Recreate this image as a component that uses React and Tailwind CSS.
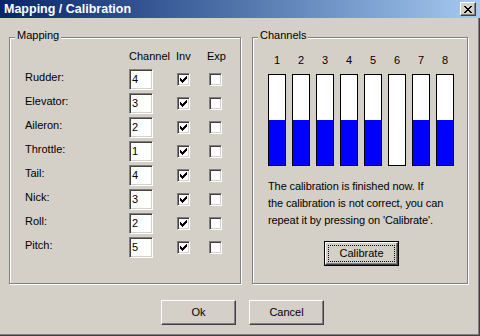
import React from "react";

const CHECK = [
  "......#",
  ".....##",
  "#...###",
  "##.###.",
  "#####..",
  ".###...",
  "..#....",
];

const XGLYPH = [
  "##....##",
  ".##..##.",
  "..####..",
  "...##...",
  "..####..",
  ".##..##.",
  "##....##",
];

function PixelGlyph({ rows, className }) {
  const w = rows[0].length;
  const h = rows.length;
  const rects = [];
  rows.forEach((r, y) =>
    r.split("").forEach((c, x) => {
      if (c === "#") rects.push(<rect key={x + "-" + y} x={x} y={y} width="1" height="1" />);
    })
  );
  return (
    <svg width={w} height={h} viewBox={`0 0 ${w} ${h}`} shapeRendering="crispEdges" className={className} fill="#000">
      {rects}
    </svg>
  );
}

function Checkbox({ checked }) {
  return (
    <div className="w-[13px] h-[13px] bg-white border border-t-[#808080] border-l-[#808080] border-b-white border-r-white shadow-[inset_1px_1px_0_#404040,inset_-1px_-1px_0_#d4d0c8] flex items-center justify-center">
      {checked && <PixelGlyph rows={CHECK} />}
    </div>
  );
}

function Input({ value }) {
  return (
    <div className="w-[24px] h-[21px] bg-white border border-t-[#808080] border-l-[#808080] border-b-white border-r-white shadow-[inset_1px_1px_0_#404040,inset_-1px_-1px_0_#d4d0c8] pl-[2px] flex items-center text-[11px] leading-[13px]">
      {value}
    </div>
  );
}

function Button({ children, focused }) {
  if (focused) {
    return (
      <div className="w-[75px] h-[25px] border border-black">
        <div className="w-full h-full border border-t-white border-l-white border-b-[#404040] border-r-[#404040] shadow-[inset_-1px_-1px_0_#808080] p-[2px]">
          <div className="w-full h-full border border-dotted border-black flex items-center justify-center text-[11px] leading-[13px]">
            {children}
          </div>
        </div>
      </div>
    );
  }
  return (
    <div className="w-[75px] h-[25px] border border-t-white border-l-white border-b-[#404040] border-r-[#404040] shadow-[inset_-1px_-1px_0_#808080] flex items-center justify-center text-[11px] leading-[13px]">
      {children}
    </div>
  );
}

function GroupBox({ label, className, children }) {
  return (
    <div className={"relative border border-[#808080] shadow-[inset_1px_1px_0_#fff,1px_1px_0_#fff] " + className}>
      <div className="absolute -top-[9px] left-[5px] px-[2px] bg-[#d4d0c8] text-[11px] leading-[13px]">{label}</div>
      {children}
    </div>
  );
}

const rows = [
  ["Rudder:", "4"],
  ["Elevator:", "3"],
  ["Aileron:", "2"],
  ["Throttle:", "1"],
  ["Tail:", "4"],
  ["Nick:", "3"],
  ["Roll:", "2"],
  ["Pitch:", "5"],
];

const channels = [50, 50, 50, 50, 50, 0, 50, 50];

export default function App() {
  return (
    <div className="w-[480px] h-[336px] bg-[#d4d0c8] flex flex-col font-['Liberation_Sans',Arial,sans-serif] text-black shadow-[inset_-1px_-1px_0_#404040,inset_-2px_-2px_0_#808080] overflow-hidden">
      <div className="h-[18px] bg-linear-to-r from-[#0a246a] to-[#a6caf0] flex items-center justify-between pl-[4px] pr-[4px]">
        <span className="text-white font-bold text-[12.5px] leading-[16px] whitespace-nowrap">Mapping / Calibration</span>
        <div className="w-[16px] h-[14px] bg-[#d4d0c8] border border-t-white border-l-white border-b-[#404040] border-r-[#404040] shadow-[inset_-1px_-1px_0_#808080] flex items-center justify-center">
          <PixelGlyph rows={XGLYPH} />
        </div>
      </div>

      <div className="flex pt-[19px] pl-[9px] gap-[11px]">
        <GroupBox label="Mapping" className="w-[232px] h-[247px]">
          <div className="pt-[12px] pl-[15px] flex flex-col">
            <div className="flex text-[11px] leading-[13px]">
              <div className="w-[104px]" />
              <div className="w-[47px]">Channel</div>
              <div className="w-[31px]">Inv</div>
              <div>Exp</div>
            </div>
            <div className="mt-[6px] flex flex-col gap-[3px]">
              {rows.map(([label, v]) => (
                <div key={label} className="h-[21px] flex items-center">
                  <div className="w-[104px] text-[11px] leading-[13px] mb-[5px]">{label}</div>
                  <Input value={v} />
                  <div className="ml-[24px]">
                    <Checkbox checked />
                  </div>
                  <div className="ml-[19px]">
                    <Checkbox checked={false} />
                  </div>
                </div>
              ))}
            </div>
          </div>
        </GroupBox>

        <GroupBox label="Channels" className="w-[216px] h-[247px]">
          <div className="pt-[16px] pl-[15px] flex flex-col">
            <div className="flex gap-[6px]">
              {channels.map((pct, i) => (
                <div key={i} className="flex flex-col items-center gap-[7px]">
                  <div className="text-[11px] leading-[13px]">{i + 1}</div>
                  <div className="w-[18px] h-[92px] border border-black bg-white flex flex-col justify-end">
                    <div className="bg-[#0000ff] w-full" style={{ height: pct + "%" }} />
                  </div>
                </div>
              ))}
            </div>
            <div className="mt-[12px] text-[11px] leading-[17px] tracking-[-0.1px] whitespace-nowrap">
              The calibration is finished now. If
              <br />
              the calibration is not correct, you can
              <br />
              repeat it by pressing on 'Calibrate'.
            </div>
            <div className="mt-[12px] ml-[56px]">
              <Button focused>Calibrate</Button>
            </div>
          </div>
        </GroupBox>
      </div>

      <div className="flex pl-[161px] gap-[13px] mt-[16px]">
        <Button>Ok</Button>
        <Button>Cancel</Button>
      </div>
    </div>
  );
}
